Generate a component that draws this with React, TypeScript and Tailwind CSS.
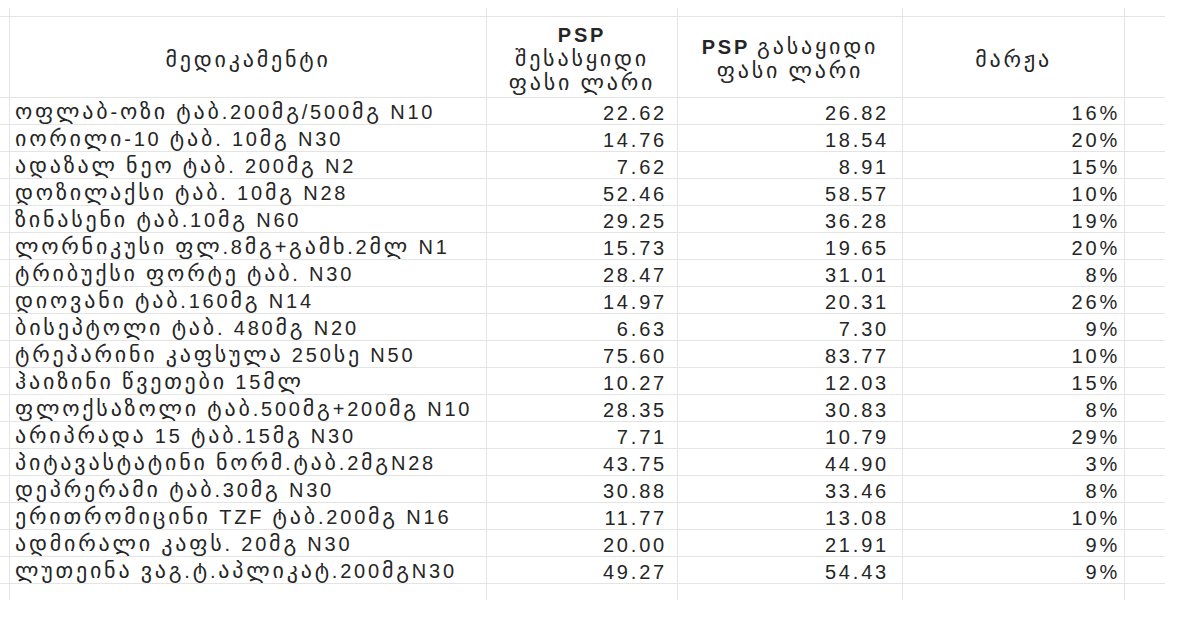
import React from "react";

const rows: [string, string, string, string][] = [
  ["ოფლაბ-ოზი ტაბ.200მგ/500მგ N10", "22.62", "26.82", "16%"],
  ["იორილი-10 ტაბ. 10მგ N30", "14.76", "18.54", "20%"],
  ["ადაზალ ნეო ტაბ. 200მგ N2", "7.62", "8.91", "15%"],
  ["დოზილაქსი ტაბ. 10მგ N28", "52.46", "58.57", "10%"],
  ["ზინასენი ტაბ.10მგ N60", "29.25", "36.28", "19%"],
  ["ლორნიკუსი ფლ.8მგ+გამხ.2მლ N1", "15.73", "19.65", "20%"],
  ["ტრიბუქსი ფორტე ტაბ. N30", "28.47", "31.01", "8%"],
  ["დიოვანი ტაბ.160მგ N14", "14.97", "20.31", "26%"],
  ["ბისეპტოლი ტაბ. 480მგ N20", "6.63", "7.30", "9%"],
  ["ტრეპარინი კაფსულა 250სე N50", "75.60", "83.77", "10%"],
  ["ჰაიზინი წვეთები 15მლ", "10.27", "12.03", "15%"],
  ["ფლოქსაზოლი ტაბ.500მგ+200მგ N10", "28.35", "30.83", "8%"],
  ["არიპრადა 15 ტაბ.15მგ N30", "7.71", "10.79", "29%"],
  ["პიტავასტატინი ნორმ.ტაბ.2მგN28", "43.75", "44.90", "3%"],
  ["დეპრერამი ტაბ.30მგ N30", "30.88", "33.46", "8%"],
  ["ერითრომიცინი TZF ტაბ.200მგ N16", "11.77", "13.08", "10%"],
  ["ადმირალი კაფს. 20მგ N30", "20.00", "21.91", "9%"],
  ["ლუთეინა ვაგ.ტ.აპლიკატ.200მგN30", "49.27", "54.43", "9%"],
];

const cell = "border-r border-b border-[#e4e4e4]";

function Ka({ text }: { text: string }) {
  const parts = text.split(/([\u10A0-\u10FF]+)/);
  return (
    <span className="whitespace-nowrap leading-[24px]">
      {parts.map((p, i) =>
        /[\u10A0-\u10FF]/.test(p) ? (
          <span key={i} className="text-[22px] tracking-[2.8px] leading-[24px]">
            {p}
          </span>
        ) : (
          <span key={i}>{p}</span>
        )
      )}
    </span>
  );
}

export default function App() {
  return (
    <div
      className="w-[1200px] h-[620px] bg-white overflow-hidden pt-[8px] text-[#252525]"
      style={{ fontFamily: '"Liberation Sans", "DejaVu Sans", sans-serif' }}
    >
      <div className="grid grid-cols-[10px_477px_191px_225px_222px_40px] w-[1165px] text-[20px] tracking-[2.8px]">
        {/* partial top row */}
        <div className={`${cell} h-[9px]`} />
        <div className={`${cell} h-[9px]`} />
        <div className={`${cell} h-[9px]`} />
        <div className={`${cell} h-[9px]`} />
        <div className={`${cell} h-[9px]`} />
        <div className="border-b border-[#e4e4e4] h-[9px]" />

        {/* header */}
        <div className={`${cell} h-[81px]`} />
        <div className={`${cell} h-[81px] flex items-center justify-center pt-[6px]`}>
          <Ka text="მედიკამენტი" />
        </div>
        <div className={`${cell} h-[81px] flex flex-col items-center justify-center pt-[3px]`}>
          <span className="font-bold leading-[24px] h-[24px]">PSP</span>
          <span className="h-[24px] flex items-center"><Ka text="შესასყიდი" /></span>
          <span className="h-[24px] flex items-center"><Ka text="ფასი ლარი" /></span>
        </div>
        <div className={`${cell} h-[81px] flex flex-col items-center justify-center pt-[4px]`}>
          <span className="whitespace-nowrap h-[24px] flex items-center gap-[7px]">
            <span className="font-bold leading-[24px]">PSP</span>
            <Ka text="გასაყიდი" />
          </span>
          <span className="h-[24px] flex items-center"><Ka text="ფასი ლარი" /></span>
        </div>
        <div className={`${cell} h-[81px] flex items-center justify-center pt-[6px]`}>
          <Ka text="მარჟა" />
        </div>
        <div className="border-b border-[#e4e4e4] h-[81px]" />

        {rows.map((r, i) => (
          <React.Fragment key={i}>
            <div className={`${cell} h-[27px]`} />
            <div className={`${cell} h-[27px] flex items-center pl-[5px] pt-[2px] overflow-hidden`}>
              <Ka text={r[0]} />
            </div>
            <div className={`${cell} h-[27px] flex items-center justify-end pr-[10px] pt-[3px]`}>{r[1]}</div>
            <div className={`${cell} h-[27px] flex items-center justify-end pr-[13px] pt-[3px]`}>{r[2]}</div>
            <div className={`${cell} h-[27px] flex items-center justify-end pr-[4px] pt-[3px]`}>{r[3]}</div>
            <div className="border-b border-[#e4e4e4] h-[27px]" />
          </React.Fragment>
        ))}

        {/* partial bottom row */}
        <div className="border-r border-[#e4e4e4] h-[16px]" />
        <div className="border-r border-[#e4e4e4] h-[16px]" />
        <div className="border-r border-[#e4e4e4] h-[16px]" />
        <div className="border-r border-[#e4e4e4] h-[16px]" />
        <div className="border-r border-[#e4e4e4] h-[16px]" />
        <div className="h-[16px]" />
      </div>
    </div>
  );
}
